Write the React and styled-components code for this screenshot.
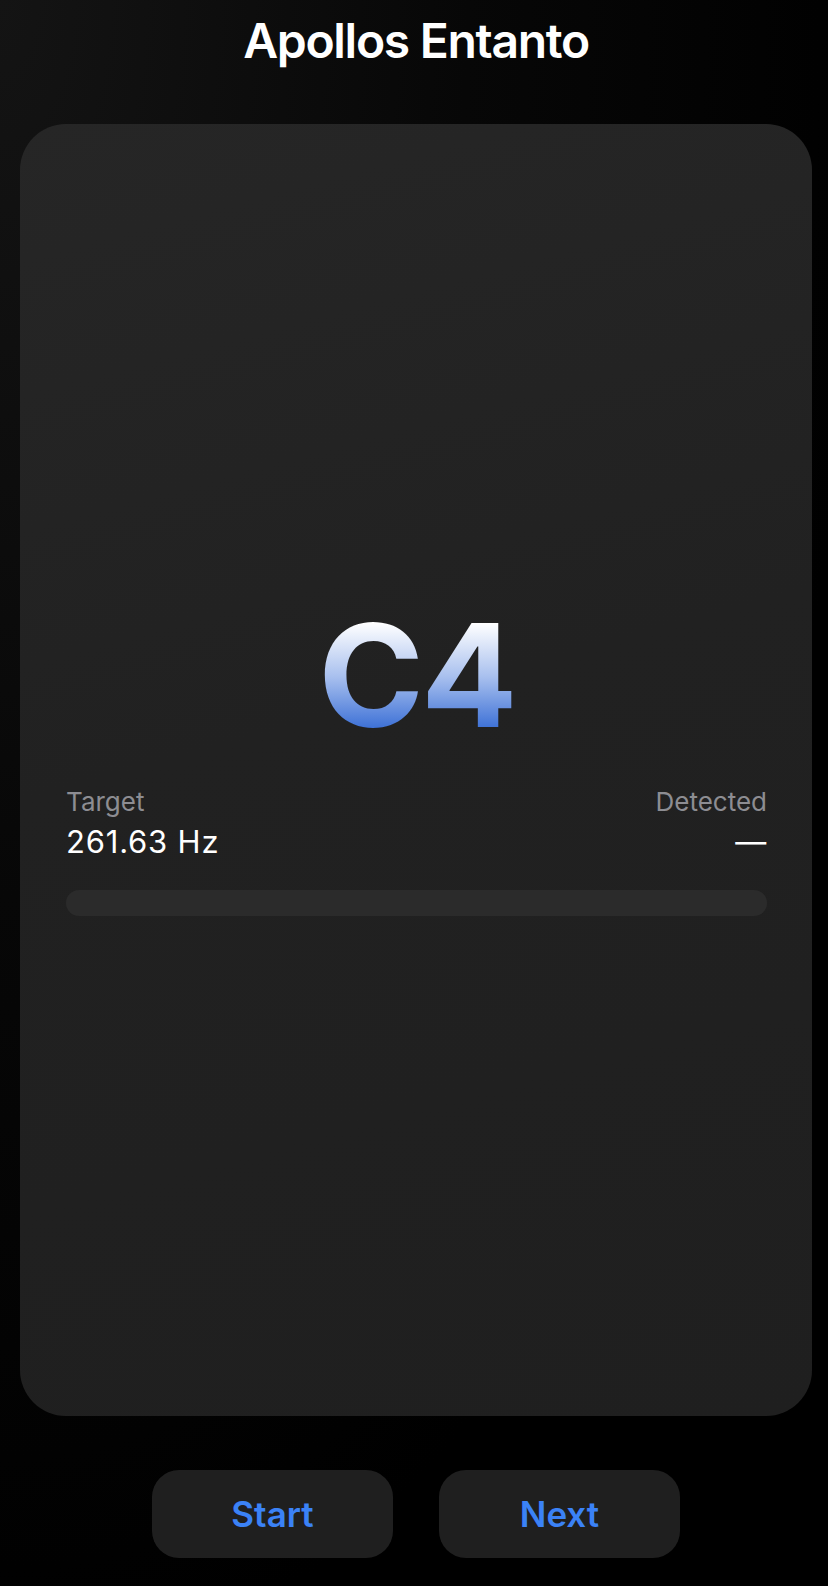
import React from "react";
import styled, { createGlobalStyle } from "styled-components";

const GlobalStyle = createGlobalStyle`
  html, body {
    margin: 0;
    padding: 0;
    background: #000;
  }
  body {
    font-family: Inter, "Noto Sans", "Liberation Sans", sans-serif;
    -webkit-font-smoothing: antialiased;
  }
`;

const Screen = styled.div`
  box-sizing: border-box;
  height: 1586px;
  padding: 0 16px 0 20px;
  display: flex;
  flex-direction: column;
  background: radial-gradient(
    ellipse at 0% 0%,
    #141414 0%,
    #070707 40%,
    #000 75%
  );
`;

const Header = styled.header`
  box-sizing: border-box;
  height: 124px;
  padding-top: 12px;
  text-align: center;
`;

const Title = styled.h1`
  margin: 0;
  font-size: 48px;
  line-height: 1.2;
  font-weight: 600;
  letter-spacing: -1.3px;
  color: #fff;
`;

const Card = styled.section`
  box-sizing: border-box;
  height: 1292px;
  border-radius: 46px;
  padding: 0 45px 21px 46px;
  display: flex;
  flex-direction: column;
  justify-content: center;
  background: linear-gradient(165deg, #262626 0%, #212121 45%, #1f1f1f 100%);
`;

const Note = styled.div`
  align-self: center;
  font-size: 143px;
  line-height: 1;
  font-weight: 700;
  letter-spacing: -3px;
  background: linear-gradient(180deg, #ffffff 14%, #a7bfee 52%, #3c70d6 88%);
  -webkit-background-clip: text;
  background-clip: text;
  color: transparent;
`;

const Readouts = styled.div`
  margin-top: 40px;
  display: flex;
  justify-content: space-between;
`;

const Readout = styled.div`
  display: flex;
  flex-direction: column;
  gap: 5px;
  align-items: ${(p) => (p.$right ? "flex-end" : "flex-start")};
`;

const Label = styled.span`
  font-size: 26px;
  line-height: 1.2;
  color: #8d8d92;
`;

const Value = styled.span`
  font-size: 31px;
  line-height: 1.2;
  letter-spacing: 0.8px;
  color: #fff;
`;

const Meter = styled.div`
  margin-top: 30px;
  height: 26px;
  border-radius: 13px;
  background: #2b2b2b;
`;

const Controls = styled.div`
  margin-top: 54px;
  display: flex;
  justify-content: center;
  gap: 46px;
`;

const Button = styled.button`
  width: 241px;
  height: 88px;
  border: none;
  border-radius: 27px;
  background: #1f1f1f;
  color: #3b82f6;
  font-family: inherit;
  font-size: 35px;
  font-weight: 600;
  cursor: pointer;
`;

export default function App() {
  return (
    <>
      <GlobalStyle />
      <Screen>
        <Header>
          <Title>Apollos Entanto</Title>
        </Header>
        <Card>
          <Note>C4</Note>
          <Readouts>
            <Readout>
              <Label>Target</Label>
              <Value>261.63 Hz</Value>
            </Readout>
            <Readout $right>
              <Label>Detected</Label>
              <Value>—</Value>
            </Readout>
          </Readouts>
          <Meter />
        </Card>
        <Controls>
          <Button>Start</Button>
          <Button>Next</Button>
        </Controls>
      </Screen>
    </>
  );
}
